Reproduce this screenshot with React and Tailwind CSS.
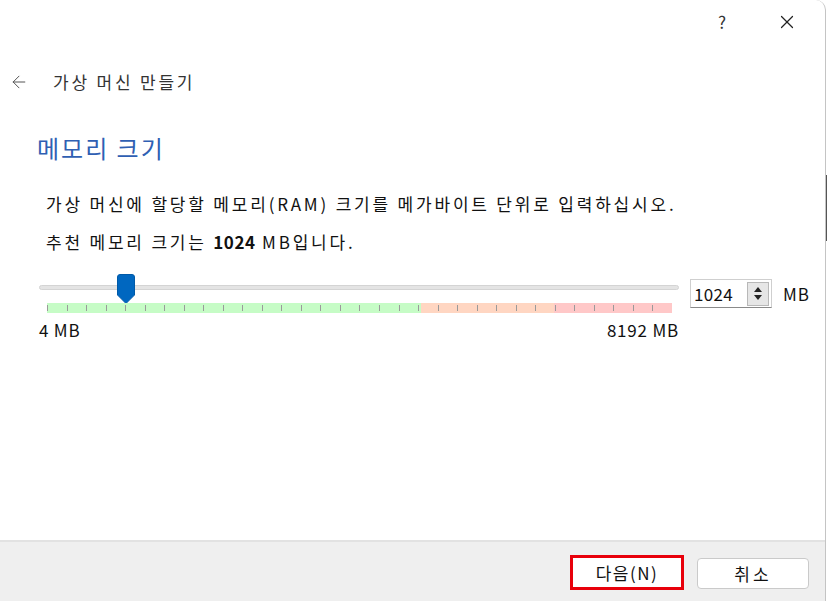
import { ArrowLeft, X } from 'lucide-react'

const font = { fontFamily: '"Noto Sans CJK KR", "Noto Sans", sans-serif' }

function Thumb() {
  return (
    <svg width="18" height="30" viewBox="0 0 18 30" className="block">
      <path d="M3 0.5 H15 Q17.5 0.5 17.5 3 V21 L9 29.5 L0.5 21 V3 Q0.5 0.5 3 0.5 Z" fill="#0067c0" stroke="#005aa8" />
    </svg>
  )
}

function TickBar() {
  const ticks = Array.from({ length: 32 }, (_, i) => i)
  return (
    <div className="relative h-[10px] w-[625px] flex">
      <div className="h-full w-[374px] bg-[#c6fcc6]" />
      <div className="h-full w-[133px] bg-[#ffd6c2]" />
      <div className="h-full flex-1 bg-[#ffc8c8]" />
      {ticks.map((i) => (
        <div
          key={i}
          className="absolute top-[2px] h-[6px] w-px bg-[#9a9a9a]"
          style={{ left: Math.round(i * 19.53) }}
        />
      ))}
    </div>
  )
}

export default function App() {
  return (
    <div className="w-[828px] h-[601px] bg-white flex overflow-hidden" style={font}>
      <div className="w-[826px] h-full flex flex-col border-r border-[#c4c4c4] rounded-tr-[10px] bg-white text-[#1a1a1a]">
        {/* title bar */}
        <div className="h-[44px] flex items-center justify-end pr-[27px] gap-[50px]">
          <span className="text-[17px] text-[#333]">?</span>
          <X size={22} strokeWidth={1.3} className="text-[#222]" />
        </div>

        {/* wizard header */}
        <div className="h-[38px] mt-[19px] flex items-center pl-[9px]">
          <ArrowLeft size={20} strokeWidth={1.2} className="text-[#555]" />
          <span className="ml-[24px] text-[17px] tracking-[2.8px] text-[#333]">가상 머신 만들기</span>
        </div>

        <div className="pl-[37px] mt-[30px] text-[24px] leading-[34px] tracking-[2px] text-[#2f5fb3]">메모리 크기</div>

        <div className="pl-[46px] mt-[28px] text-[17px] leading-[22px] tracking-[2.8px] text-[#111]">
          가상 머신에 할당할 메모리(RAM) 크기를 메가바이트 단위로 입력하십시오.
        </div>
        <div className="pl-[46px] mt-[16px] text-[17px] leading-[22px] tracking-[2.8px] text-[#111]">
          추천 메모리 크기는 <span className="font-bold tracking-[0.5px]">1024</span> MB입니다.
        </div>

        {/* slider row */}
        <div className="mt-[20px] flex items-start">
          <div className="ml-[39px] w-[640px] flex flex-col">
            <div className="relative h-[30px]">
              <div className="absolute top-[12px] left-0 w-[640px] h-[5px] rounded-full bg-[#e4e4e4] border border-[#d4d4d4]" />
              <div className="absolute left-[78px] top-[1px]">
                <Thumb />
              </div>
            </div>
            <div className="ml-[8px]">
              <TickBar />
            </div>
            <div className="mt-[6px] flex justify-between text-[17px] leading-[22px] tracking-[0.8px] text-[#111]">
              <span>4 MB</span>
              <span>8192 MB</span>
            </div>
          </div>

          <div className="ml-[11px] mt-[6px] flex items-center">
            <div className="w-[82px] h-[29px] flex items-center border border-[#cfcfcf] border-b-[#8a8a8a] bg-white">
              <span className="ml-[3px] flex-1 text-[17px] tracking-[0.3px] text-[#111]">1024</span>
              <div className="mr-[2px] w-[22px] h-[24px] border border-[#b8b8b8] bg-[#e6e6e6] flex flex-col items-center justify-center gap-[3px]">
                <svg width="8" height="5" viewBox="0 0 8 5"><path d="M0 5 L4 0 L8 5 Z" fill="#222" /></svg>
                <svg width="8" height="5" viewBox="0 0 8 5"><path d="M0 0 L4 5 L8 0 Z" fill="#222" /></svg>
              </div>
            </div>
            <span className="ml-[11px] text-[17px] tracking-[1px] text-[#111]">MB</span>
          </div>
        </div>

        <div className="flex-1" />

        {/* footer */}
        <div className="h-[61px] border-t-2 border-[#e2e2e2] bg-[#efefef] flex items-start justify-end pr-[16px] pt-[13px]">
          <div className="w-[114px] h-[35px] border-[3px] border-[#e8000b] bg-white flex items-center justify-center text-[17px] tracking-[1.5px] text-[#111]">
            다음(N)
          </div>
          <div className="ml-[13px] mt-[3px] w-[112px] h-[31px] rounded-[4px] border border-[#cacaca] bg-white flex items-center justify-center text-[17px] tracking-[3px] text-[#111]">
            취소
          </div>
        </div>
      </div>
      <div className="flex-1 flex flex-col">
        <div className="h-[175px]" />
        <div className="h-[66px] w-px bg-[#555]" />
      </div>
    </div>
  )
}
